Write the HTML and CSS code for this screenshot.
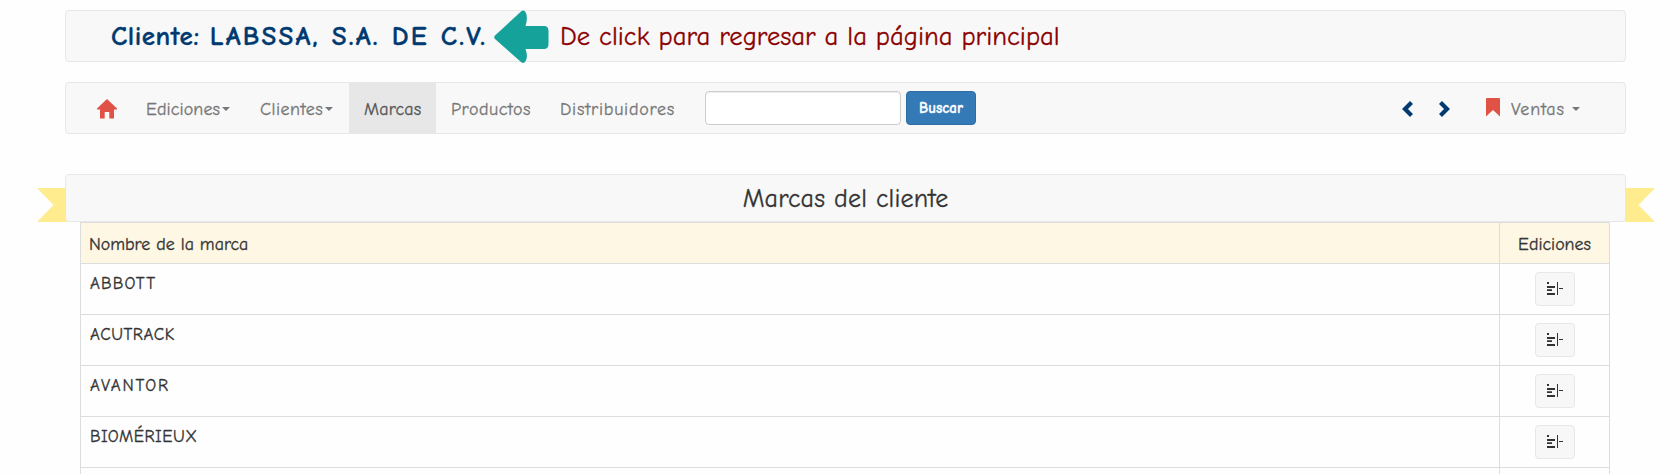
FILE: index.html
```html
<!DOCTYPE html>
<html lang="es">
<head>
<meta charset="utf-8">
<title>Marcas del cliente</title>
<link rel="stylesheet" href="styles.css">
</head>
<body>
<main class="container">
  <header class="panel client-bar">
    <strong class="client"><span class="label">Cliente: </span>LABSSA, S.A. DE C.V.</strong>
    <svg class="arrow" width="55" height="54" viewBox="0 0 55 54"><path fill="#14a29b" d="M1 25.500 27 1.500Q30-1 32 3 34 8 31.500 16H50Q54.500 16 54.500 21V34Q54.500 39 50 39H31.500Q34 46 32 50.500 30 54.500 27 52L1 29Q-.5 27 1 25.500Z"/></svg>
    <span class="hint">De click para regresar a la página principal</span>
  </header>
  <nav class="panel navbar">
    <a class="home"><svg width="20" height="20" viewBox="0 0 20 20"><path fill="#df5245" d="M10 0 20 9.500V10.500H17V19.500H12.300V13H7.700V19.500H3V10.500H0V9.500Z"/></svg></a>
    <a class="item ediciones"><span>Ediciones</span><i class="caret"></i></a>
    <a class="item clientes"><span>Clientes</span><i class="caret"></i></a>
    <a class="item marcas active"><span>Marcas</span></a>
    <a class="item productos"><span>Productos</span></a>
    <a class="item distribuidores"><span>Distribuidores</span></a>
    <form class="search"><input type="text"><button type="button">Buscar</button></form>
    <div class="right">
      <svg width="11" height="16" viewBox="0 0 11 16"><path fill="none" stroke="#003a70" stroke-width="4.200" d="M9.500 1.500 3 8 9.500 14.500"/></svg>
      <svg class="next" width="11" height="16" viewBox="0 0 11 16"><path fill="none" stroke="#003a70" stroke-width="4.200" d="M1.500 1.500 8 8 1.500 14.500"/></svg>
      <svg class="bookmark" width="14" height="19" viewBox="0 0 14 19"><path fill="#df5245" d="M0 1Q0 0 1 0H13Q14 0 14 1V18.500L7 12 0 18.500Z"/></svg>
      <span class="ventas">Ventas</span><i class="caret"></i>
    </div>
  </nav>
  <div class="ribbon">
    <svg class="tail left" width="30" height="34" viewBox="0 0 30 34"><path fill="#ffec8e" d="M0 0H30V34H0L16.500 17Z"/></svg>
    <h1 class="panel title">Marcas del cliente</h1>
    <svg class="tail end" width="30" height="34" viewBox="0 0 30 34"><path fill="#ffec8e" d="M30 0H0V34H30L13.500 17Z"/></svg>
  </div>
  <table class="brands">
    <thead><tr><th>Nombre de la marca</th><th class="action">Ediciones</th></tr></thead>
    <tbody>
      <tr><td class="wide">ABBOTT</td><td class="action"><button><svg width="16" height="14" viewBox="0 0 16 14"><path fill="#333" d="M0 0H2V2H0ZM0 4H8V6H0ZM0 7.300H5V9H0ZM0 11H8V13H0ZM10 0H11V13H10ZM12 6H16V7H12Z"/></svg></button></td></tr>
      <tr><td>ACUTRACK</td><td class="action"><button><svg width="16" height="14" viewBox="0 0 16 14"><path fill="#333" d="M0 0H2V2H0ZM0 4H8V6H0ZM0 7.300H5V9H0ZM0 11H8V13H0ZM10 0H11V13H10ZM12 6H16V7H12Z"/></svg></button></td></tr>
      <tr><td class="wider">AVANTOR</td><td class="action"><button><svg width="16" height="14" viewBox="0 0 16 14"><path fill="#333" d="M0 0H2V2H0ZM0 4H8V6H0ZM0 7.300H5V9H0ZM0 11H8V13H0ZM10 0H11V13H10ZM12 6H16V7H12Z"/></svg></button></td></tr>
      <tr><td>BIOMÉRIEUX</td><td class="action"><button><svg width="16" height="14" viewBox="0 0 16 14"><path fill="#333" d="M0 0H2V2H0ZM0 4H8V6H0ZM0 7.300H5V9H0ZM0 11H8V13H0ZM10 0H11V13H10ZM12 6H16V7H12Z"/></svg></button></td></tr>
      <tr class="partial"><td></td><td></td></tr>
    </tbody>
  </table>
</main>
</body>
</html>
```
FILE: styles.css
```css
* { box-sizing: border-box; }
body {
  margin: 0;
  background: #fefefe;
  color: #333;
  font-family: "Comic Sans MS", "Comic Neue", Lato, sans-serif;
  font-size: 16px;
  -webkit-text-stroke: .3px currentColor;
}
.container { width: 1561px; height: 474px; margin-left: 65px; padding-top: 10px; }
.panel { border: 1px solid #e7e7e7; border-radius: 4px; background: #f8f8f8; }
.client-bar { height: 52px; display: flex; align-items: center; padding-left: 45px; white-space: nowrap; }
.client { width: 383px; flex: none; font-size: 27px; color: #003a70; letter-spacing: 2.2px; }
.label { letter-spacing: .55px; }
.arrow { flex: none; position: relative; top: 1px; }
.hint { margin-left: 11px; padding-top: 1px; font-size: 26.7px; color: #8b0000; }
.navbar { height: 52px; margin-top: 20px; display: flex; align-items: center; color: #777; white-space: nowrap; }
.home { width: 65px; padding: 1px 0 0 31px; display: flex; flex: none; }
.item { height: 50px; display: flex; align-items: center; padding-left: 15px; padding-top: 2px; flex: none; font-size: 18px; }
.ediciones { width: 114px; letter-spacing: .1px; }
.clientes { width: 104px; letter-spacing: .5px; }
.marcas { width: 87px; letter-spacing: .15px; }
.productos { width: 109px; letter-spacing: .5px; }
.distribuidores { width: 145px; letter-spacing: .75px; }
.active { background: #e7e7e7; color: #555; }
.caret { border: 4px solid transparent; border-top-color: #777; border-bottom: 0; margin-left: 2px; }
.search { display: flex; align-items: center; gap: 5px; margin: 0 0 0 15px; flex: none; }
.search input { width: 196px; height: 34px; border: 1px solid #ccc; border-radius: 4px; background: #fff; box-shadow: inset 0 1px 1px rgba(0,0,0,.075); }
.search button { width: 70px; height: 34px; padding: 0; border: 1px solid #2e6da4; border-radius: 4px; background: #337ab7; color: #fff; font-family: inherit; font-size: 15px; font-weight: 700; }
.right { margin-left: auto; display: flex; align-items: center; padding: 2px 45px 0 0; }
.next { margin-left: 26px; }
.bookmark { margin: -4px 11px 0 36px; }
.ventas { width: 54px; font-size: 18px; letter-spacing: .8px; }
.right .caret { margin-left: 7px; }
.ribbon { position: relative; margin-top: 40px; }
.title { position: relative; margin: 0; height: 48px; text-align: center; font-size: 26px; font-weight: 400; line-height: 49px; letter-spacing: .17px; }
.tail { position: absolute; top: 14px; }
.left { left: -28px; }
.end { right: -29px; }
.brands { width: 1530px; margin-left: 15px; border-collapse: collapse; table-layout: fixed; }
.brands th, .brands td { border: 1px solid #ddd; padding: 8px; text-align: left; vertical-align: top; font-weight: 400; }
.brands th { height: 41px; padding: 9px 8px 6px; background: #fef7e3; font-size: 17.9px; line-height: 25px; }
.brands td { height: 51px; padding-top: 7.5px; padding-bottom: 7.5px; font-size: 17px; line-height: 23px; letter-spacing: .48px; }
.brands .action { width: 110px; text-align: center; }
.brands td:first-child { padding-left: 9px; }
.brands .wide { letter-spacing: 1.2px; }
.brands .wider { letter-spacing: 1.8px; }
.brands .partial td { height: 6px; padding: 0; border-bottom: 0; }
.brands button { display: flex; align-items: center; justify-content: center; width: 40px; height: 34px; margin: 0 auto; padding: 0; border: 1px solid #e7e7e7; border-radius: 4px; background: #f7f7f7; }
```
